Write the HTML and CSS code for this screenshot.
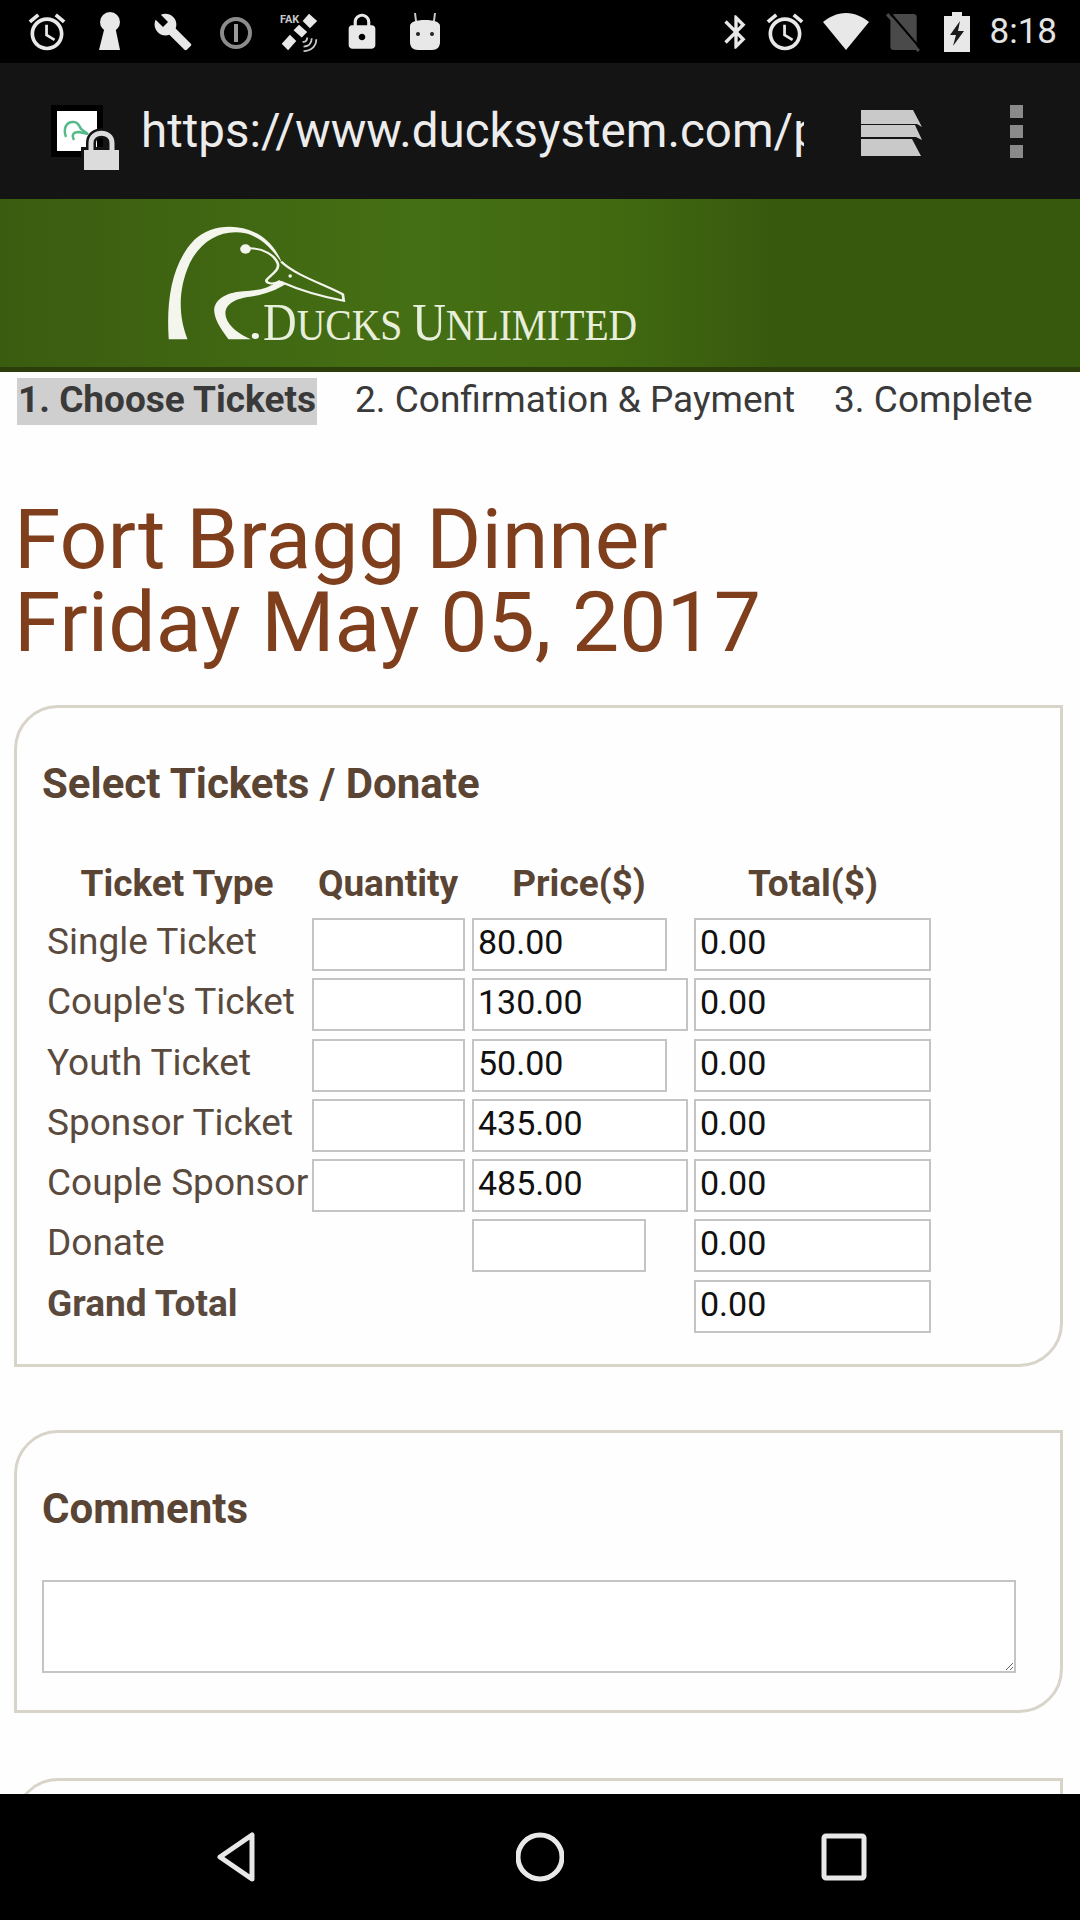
FILE: index.html
```html
<!DOCTYPE html>
<html lang="en">
<head>
    <meta charset="UTF-8">
    <meta name="viewport" content="width=device-width, initial-scale=1.0">
    <title>Fort Bragg Dinner</title>
    <link rel="stylesheet" href="styles.css">
</head>
<body>
    <!-- Android status bar -->
    <div class="status-bar">
        <div class="status-group">
            <svg class="status-icon alarm" viewBox="0 0 24 24"><path fill="#e8e8e8" d="M22 5.72l-4.6-3.86-1.29 1.53 4.6 3.86L22 5.72zM7.88 3.39L6.6 1.86 2 5.71l1.29 1.53 4.59-3.85zM12.5 8H11v6l4.75 2.85.75-1.23-4-2.37V8zM12 4c-4.97 0-9 4.03-9 9s4.02 9 9 9c4.97 0 9-4.03 9-9s-4.03-9-9-9zm0 16c-3.87 0-7-3.13-7-7s3.13-7 7-7 7 3.13 7 7-3.13 7-7 7z"/></svg>
            <svg class="status-icon" viewBox="0 0 40 40"><circle cx="20" cy="10" r="10" fill="#e8e8e8"/><path fill="#e8e8e8" d="M15 14h10l5 24H9z"/></svg>
            <svg class="status-icon" viewBox="0 0 24 24"><path fill="#e8e8e8" d="M22.7 19l-9.1-9.1c.9-2.3.4-5-1.5-6.9-2-2-5-2.4-7.4-1.3L9 6 6 9 1.6 4.7C.4 7.1.9 10.1 2.9 12.1c1.9 1.9 4.6 2.4 6.9 1.5l9.1 9.1c.4.4 1 .4 1.4 0l2.3-2.3c.5-.4.5-1.1.1-1.4z"/></svg>
            <svg class="status-icon" viewBox="0 0 40 40"><circle cx="20" cy="21" r="14" fill="none" stroke="#8c8c8c" stroke-width="4"/><rect x="18" y="12" width="4" height="18" fill="#9a9a9a"/></svg>
            <svg class="status-icon" viewBox="0 0 44 44">
                <path fill="#e8e8e8" d="M33 2l9 8-8 8-8-8zM22 14l9 8-6 6-9-8zM12 25l7 7-9 10-7-7z"/>
                <text x="1" y="12" class="fake-text">FAK</text>
                <path fill="none" stroke="#c8c8c8" stroke-width="2" d="M31 28c0 3-2 5-5 5M36 29c0 6-4 9-9 9M41 30c0 8-6 13-14 13"/>
            </svg>
            <svg class="status-icon" viewBox="0 0 24 24"><path fill="#e8e8e8" d="M18 8h-1V6c0-2.76-2.24-5-5-5S7 3.24 7 6v2H6c-1.1 0-2 .9-2 2v10c0 1.1.9 2 2 2h12c1.1 0 2-.9 2-2V10c0-1.1-.9-2-2-2zm-6 9c-1.1 0-2-.9-2-2s.9-2 2-2 2 .9 2 2-.9 2-2 2zm3.1-9H8.9V6c0-1.71 1.39-3.1 3.1-3.1 1.71 0 3.1 1.39 3.1 3.1v2z"/></svg>
            <svg class="status-icon" viewBox="0 0 40 40">
                <path fill="none" stroke="#c8c8c8" stroke-width="2" d="M10 1l1 8M30 1l-1 8"/>
                <path fill="#e8e8e8" d="M5 14c0-4 6-6 15-6s15 2 15 6v16c0 5-3 8-8 8H13c-5 0-8-3-8-8z"/>
                <circle cx="13" cy="22" r="2" fill="#222"/><circle cx="27" cy="22" r="2" fill="#222"/>
            </svg>
        </div>
        <div class="status-group status-right">
            <svg class="status-icon" viewBox="0 0 24 24"><path fill="#e8e8e8" d="M17.71 7.71L12 2h-1v7.59L6.41 5 5 6.41 10.59 12 5 17.59 6.41 19 11 14.41V22h1l5.71-5.71-4.3-4.29 4.3-4.29zM13 5.83l1.88 1.88L13 9.59V5.83zm1.88 10.46L13 18.17v-3.76l1.88 1.88z"/></svg>
            <svg class="status-icon alarm" viewBox="0 0 24 24"><path fill="#e8e8e8" d="M22 5.72l-4.6-3.86-1.29 1.53 4.6 3.86L22 5.72zM7.88 3.39L6.6 1.86 2 5.71l1.29 1.53 4.59-3.85zM12.5 8H11v6l4.75 2.85.75-1.23-4-2.37V8zM12 4c-4.97 0-9 4.03-9 9s4.02 9 9 9c4.97 0 9-4.03 9-9s-4.03-9-9-9zm0 16c-3.87 0-7-3.13-7-7s3.13-7 7-7 7 3.13 7 7-3.13 7-7 7z"/></svg>
            <svg class="status-icon wifi" viewBox="0 0 46 38"><path fill="#e8e8e8" d="M0 9C6 4 14 0 23 0s17 4 23 9L23 37z"/></svg>
            <svg class="status-icon" viewBox="0 0 32 38">
                <path fill="#4a4a4a" d="M7 2h19c2 0 3 1 3 3v31H7c-2 0-3-1-3-3V9z"/>
                <path stroke="#4a4a4a" stroke-width="3" d="M1 2l30 35"/>
                <path stroke="#000" stroke-width="2" d="M3 0l30 35"/>
            </svg>
            <svg class="status-icon" viewBox="0 0 26 40">
                <path fill="#e8e8e8" d="M8 0h10v4h8v36H0V4h8z"/>
                <path fill="#1a1a1a" d="M16 9L6 23h6l-3 11 11-15h-6z"/>
            </svg>
            <span class="clock">8:18</span>
        </div>
    </div>

    <!-- Browser toolbar -->
    <div class="toolbar">
        <svg class="site-icon" viewBox="0 0 68 66">
            <rect width="52" height="52" fill="#000"/>
            <rect x="6" y="6" width="40" height="40" fill="#fff"/>
            <path fill="none" stroke="#55b98a" stroke-width="2.5" d="M15 32c-3-8 0-16 8-15 4 0 6 5 7 7l7 5-9-2c-5 0-8 2-5 8"/>
            <path fill="none" stroke="#141414" stroke-width="10" d="M40 46v-8c0-13 21-13 21 0v8"/>
            <path fill="#141414" d="M30 42h40v24H30z"/>
            <path fill="none" stroke="#dcdcdc" stroke-width="5" d="M40 46v-8c0-13 21-13 21 0v8"/>
            <path fill="#dcdcdc" d="M33 45h35v20H33z"/>
        </svg>
        <div class="url">https://www.ducksystem.com/payment/tickets</div>
        <svg class="tabs-icon" viewBox="0 0 62 47">
            <path fill="#c9c9c9" d="M0 0h52l9 17-5-3H0zM0 15h54l7 15-6-3H0zM0 29h51l9 17H0z"/>
        </svg>
        <div class="menu-dots"><span></span><span></span><span></span></div>
    </div>

    <!-- Page content -->
    <main class="page">
        <header class="site-header">
            <svg class="logo" width="700" height="168" viewBox="0 0 700 168">
                <g transform="translate(0 1) scale(0.4464 0.3333)" fill="#f4f6ee">
                    <path d="M378 418C372 300 385 190 435 120C470 75 530 68 575 100C605 122 622 155 632 190C610 150 590 115 550 100C500 85 450 120 425 190C398 270 400 350 420 418Z"/>
                    <path d="M625 240C600 270 570 272 535 275C500 280 478 305 480 335C482 365 500 395 512 418L562 418C530 400 505 370 505 340C505 310 530 295 560 290C590 285 620 270 640 252Z"/>
                    <ellipse cx="550" cy="147" rx="12" ry="14"/>
                    <ellipse cx="650" cy="228" rx="4" ry="5"/>
                    <ellipse cx="572" cy="408" rx="8" ry="9"/>
                    <path fill="none" stroke="#f4f6ee" stroke-width="6" d="M630 185C660 225 730 255 768 283L770 302C720 290 670 270 628 245M560 145C590 145 615 165 622 190C628 210 605 225 597 240C595 250 610 255 625 245"/>
                </g>
                <text transform="translate(263 141) scale(0.88 1)" class="logo-text"><tspan class="logo-cap">D</tspan>UCKS <tspan class="logo-cap">U</tspan>NLIMITED</text>
            </svg>
        </header>

        <nav class="steps">
            <span class="step step-active">1. Choose Tickets</span>
            <span class="step">2. Confirmation &amp; Payment</span>
            <span class="step">3. Complete</span>
        </nav>

        <h1 class="event-title">Fort Bragg Dinner<br>Friday May 05, 2017</h1>

        <form>
            <section class="card card-tickets">
                <h2>Select Tickets / Donate</h2>
                <table class="tickets">
                    <thead>
                        <tr>
                            <th>Ticket Type</th>
                            <th class="th-qty">Quantity</th>
                            <th class="th-price">Price($)</th>
                            <th>Total($)</th>
                        </tr>
                    </thead>
                    <tbody>
                        <tr>
                            <td class="label">Single Ticket</td>
                            <td><input class="qty" type="text"></td>
                            <td><input class="price-short" type="text" value="80.00"></td>
                            <td><input class="total" type="text" value="0.00"></td>
                        </tr>
                        <tr>
                            <td class="label">Couple's Ticket</td>
                            <td><input class="qty" type="text"></td>
                            <td><input class="price" type="text" value="130.00"></td>
                            <td><input class="total" type="text" value="0.00"></td>
                        </tr>
                        <tr>
                            <td class="label">Youth Ticket</td>
                            <td><input class="qty" type="text"></td>
                            <td><input class="price-short" type="text" value="50.00"></td>
                            <td><input class="total" type="text" value="0.00"></td>
                        </tr>
                        <tr>
                            <td class="label">Sponsor Ticket</td>
                            <td><input class="qty" type="text"></td>
                            <td><input class="price" type="text" value="435.00"></td>
                            <td><input class="total" type="text" value="0.00"></td>
                        </tr>
                        <tr>
                            <td class="label">Couple Sponsor</td>
                            <td><input class="qty" type="text"></td>
                            <td><input class="price" type="text" value="485.00"></td>
                            <td><input class="total" type="text" value="0.00"></td>
                        </tr>
                        <tr>
                            <td class="label">Donate</td>
                            <td></td>
                            <td><input class="donate" type="text"></td>
                            <td><input class="total" type="text" value="0.00"></td>
                        </tr>
                        <tr>
                            <td class="label grand">Grand Total</td>
                            <td></td>
                            <td></td>
                            <td><input class="total" type="text" value="0.00"></td>
                        </tr>
                    </tbody>
                </table>
            </section>

            <section class="card card-comments">
                <h2>Comments</h2>
                <textarea class="comments"></textarea>
            </section>

            <section class="card card-next"></section>
        </form>
    </main>

    <!-- Android navigation bar -->
    <div class="nav-bar">
        <svg class="nav-icon" viewBox="0 0 48 52"><path fill="none" stroke="#e8e8e8" stroke-width="5" stroke-linejoin="round" d="M40 4v44L8 26z"/></svg>
        <svg class="nav-icon" viewBox="0 0 48 52"><circle cx="24" cy="26" r="22" fill="none" stroke="#e8e8e8" stroke-width="5"/></svg>
        <svg class="nav-icon" viewBox="0 0 48 52"><rect x="4" y="5" width="40" height="42" rx="2" fill="none" stroke="#e8e8e8" stroke-width="5"/></svg>
    </div>
</body>
</html>
```

FILE: styles.css
```css
/* General styling */
body {
    font-family: Roboto, "Liberation Sans", sans-serif;
    margin: 0;
    width: 1080px;
    height: 1920px;
    display: flex;
    flex-direction: column;
    overflow: hidden;
    background-color: #000;
}

/* Status bar */
.status-bar {
    height: 63px;
    flex: none;
    display: flex;
    justify-content: space-between;
    align-items: center;
    padding: 0 23px 0 27px;
    background-color: #000;
}
.status-group {
    display: flex;
    align-items: center;
    gap: 23px;
}
.status-right {
    gap: 14px;
}
.status-icon {
    width: 40px;
    height: 40px;
    display: block;
}
.alarm {
    width: 44px;
    height: 44px;
    margin: 0 -2px;
}
.status-right .alarm {
    margin: 0 2px 0 -7px;
}
.wifi {
    width: 46px;
    height: 38px;
}
.fake-text {
    font-family: Roboto, sans-serif;
    font-size: 12px;
    font-weight: 700;
    fill: #c8c8c8;
}
.clock {
    margin-left: -1px;
    font-size: 35px;
    color: #e4e4e4;
}

/* Browser toolbar */
.toolbar {
    height: 136px;
    flex: none;
    display: flex;
    align-items: center;
    padding: 0 56px 0 51px;
    background-color: #141414;
}
.site-icon {
    width: 68px;
    height: 66px;
    flex: none;
    margin-top: 14px;
}
.url {
    width: 663px;
    flex: none;
    margin-left: 22px;
    font-size: 47.5px;
    color: #ececec;
    white-space: nowrap;
    overflow: hidden;
}
.tabs-icon {
    width: 62px;
    height: 47px;
    flex: none;
    margin: 4px 0 0 57px;
}
.menu-dots {
    margin-left: 87px;
    display: flex;
    flex-direction: column;
    gap: 7px;
}
.menu-dots span {
    width: 13px;
    height: 13px;
    background-color: #8a8a8a;
}

/* Page */
.page {
    flex: 1;
    overflow: hidden;
    background-color: #fefefe;
}
.site-header {
    height: 168px;
    border-bottom: 5px solid #2c3f0a;
    background: linear-gradient(90deg, #3a5c10, #456f14 38%, #426b11 55%, #37590e 72%);
}
.logo {
    display: block;
}
.logo-text {
    font-family: "Liberation Serif", serif;
    font-size: 45px;
    fill: #e8eedc;
}
.logo-cap {
    font-size: 53px;
}
.steps {
    display: flex;
    gap: 37px;
    padding: 6px 0 0 17px;
    font-size: 37px;
    line-height: 43px;
    color: #3a3a3a;
}
.step {
    padding: 0 1px 4px;
}
.step-active {
    font-weight: 700;
    background-color: #cfcfcf;
}
.event-title {
    margin: 73px 0 41px 14px;
    font-size: 84px;
    font-weight: 400;
    line-height: 83px;
    color: #7f3f1c;
}

/* Cards */
.card {
    margin: 0 17px 65px 14px;
    padding: 52px 44px 22px 25px;
    border: 3px solid #d8d4ca;
    border-radius: 44px 0 44px 0;
}
.card h2 {
    margin: 0 0 40px;
    font-size: 42px;
    line-height: 48px;
    color: #5a4535;
}
.card-tickets {
    padding-bottom: 24px;
    margin-bottom: 63px;
}
.card-comments {
    padding-bottom: 37px;
}
.card-comments h2 {
    margin-bottom: 47px;
}
.card-next {
    height: 200px;
}

/* Tickets table */
.tickets {
    border-collapse: collapse;
    table-layout: fixed;
    width: 890px;
    font-size: 37px;
    color: #5a4a3e;
}
.tickets th {
    height: 70px;
    box-sizing: border-box;
    padding: 0;
    font-size: 37px;
    color: #5a4535;
}
.tickets th:nth-child(1) { width: 270px; }
.tickets th:nth-child(2) { width: 160px; }
.tickets th:nth-child(3) { width: 222px; }
.tickets .th-qty { padding-right: 8px; }
.tickets .th-price { padding-right: 8px; }
.tickets td {
    height: 60.3px;
    padding: 0;
    vertical-align: top;
}
.tickets .label {
    padding-left: 5px;
    line-height: 47px;
    white-space: nowrap;
}
.grand {
    font-weight: 700;
}

/* Inputs */
input[type="text"] {
    display: block;
    height: 53px;
    box-sizing: border-box;
    margin: 0;
    padding: 0 4px 5px;
    border: 2px solid #c4c4c4;
    background-color: #fff;
    font-family: Roboto, sans-serif;
    font-size: 34px;
    color: #111;
}
.qty { width: 153px; }
.price { width: 216px; }
.price-short { width: 195px; }
.donate { width: 174px; }
.total { width: 237px; }
.comments {
    display: block;
    width: 974px;
    height: 93px;
    box-sizing: border-box;
    margin: 0;
    border: 2px solid #c4c4c4;
    background-color: #fff;
}

/* Navigation bar */
.nav-bar {
    height: 126px;
    flex: none;
    display: flex;
    justify-content: center;
    align-items: center;
    gap: 256px;
    background-color: #000;
}
.nav-icon {
    width: 48px;
    height: 52px;
}
```
